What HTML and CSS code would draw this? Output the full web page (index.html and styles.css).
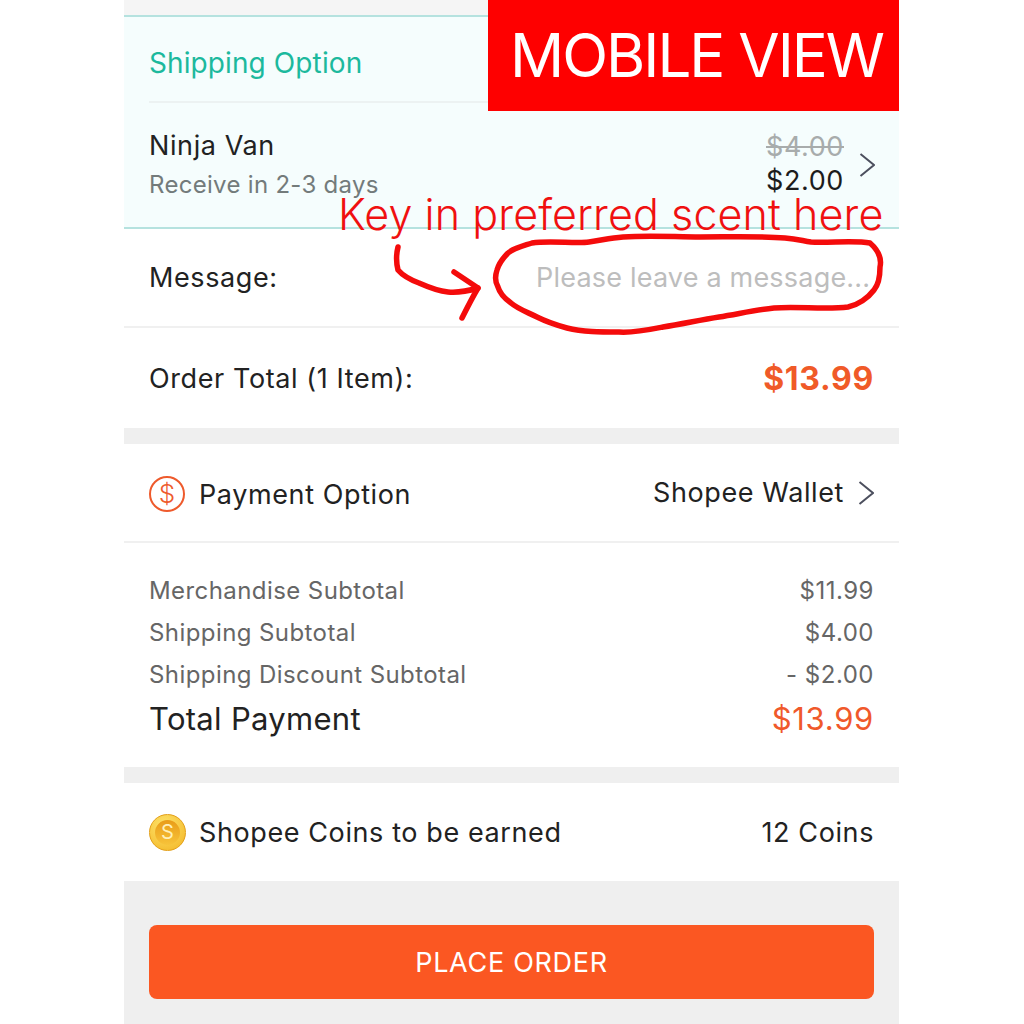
FILE: index.html
```html
<!DOCTYPE html>
<html lang="en">
<head>
  <meta charset="UTF-8" />
  <title>Checkout</title>
  <link rel="stylesheet" href="styles.css">
</head>
<body>
  <div class="phone">
    <div class="top-gap"></div>

    <section class="shipping">
      <div class="shipping-head">Shipping Option</div>
      <div class="shipping-row">
        <div>
          <div class="courier">Ninja Van</div>
          <div class="eta">Receive in 2-3 days</div>
        </div>
        <div class="shipping-price">
          <div class="prices">
            <div class="old-price">$4.00</div>
            <div class="new-price">$2.00</div>
          </div>
          <svg class="chevron" viewBox="0 0 16 24"><path d="M1.5 1 L15 12 L1.5 23" /></svg>
        </div>
      </div>
    </section>

    <section class="row message-row">
      <span>Message:</span>
      <span class="placeholder">Please leave a message...</span>
    </section>

    <section class="row total-row">
      <span>Order Total (1 Item):</span>
      <span class="total-price">$13.99</span>
    </section>

    <div class="gap"></div>

    <section class="row payment-row">
      <span class="with-icon">
        <span class="dollar-icon">$</span>
        Payment Option
      </span>
      <span class="payment-value">
        Shopee Wallet
        <svg class="chevron" viewBox="0 0 16 24"><path d="M1.5 1 L15 12 L1.5 23" /></svg>
      </span>
    </section>

    <section class="summary">
      <div class="summary-row"><span>Merchandise Subtotal</span><span class="summary-num">$11.99</span></div>
      <div class="summary-row"><span>Shipping Subtotal</span><span class="summary-num">$4.00</span></div>
      <div class="summary-row"><span>Shipping Discount Subtotal</span><span class="summary-num">- $2.00</span></div>
      <div class="summary-total"><span>Total Payment</span><span class="summary-amount">$13.99</span></div>
    </section>

    <div class="gap"></div>

    <section class="row coins-row">
      <span class="with-icon">
        <span class="coin-icon"><span class="coin-inner">S</span></span>
        Shopee Coins to be earned
      </span>
      <span>12 Coins</span>
    </section>

    <div class="footer">
      <button class="place-order">PLACE ORDER</button>
    </div>

    <div class="view-tag">MOBILE VIEW</div>
    <div class="note">Key in preferred scent here</div>
    <svg class="scribble" viewBox="0 0 1024 1024">
      <path d="M532 243 C550 240 575 244 589 242 C603 240 610 238 623 237 C650 235 675 237 700 237 C730 237 760 236 785 238 C798 239 803 241 811 242 C830 243 855 240 870 243 C878 250 882 258 880 267 C880 276 879 284 874 290 C868 298 858 305 848 307 C825 310 798 306 774 308 C755 310 738 314 719 317 C700 320 682 324 663 327 C648 330 634 333 619 332 C600 332 583 332 567 328 C556 325 547 322 537 317 C527 312 518 309 511 303 C504 298 500 294 498 287 C495 282 495 276 497 270 C499 263 503 258 508 253 C514 248 523 246 532 243 Z" />
      <path d="M398 247 C396 255 396 262 398 270 C404 277 411 280 419 283 C428 287 438 291 448 292 C458 293 468 291 478 288" />
      <path d="M454 272 L478 288 C472 298 467 308 462 318" />
    </svg>
  </div>
</body>
</html>
```

FILE: styles.css
```css
body {
  margin: 0;
  background: #fff;
  font-family: Inter, "Liberation Sans", sans-serif;
  color: #222;
}

.phone {
  position: relative;
  width: 775px;
  height: 1024px;
  margin-left: 124px;
  overflow: hidden;
  display: flex;
  flex-direction: column;
  font-size: 27px;
  letter-spacing: 0.6px;
}

.top-gap {
  height: 15px;
  background: #f5f5f5;
}

.gap {
  height: 16px;
  background: #efefef;
}

/* shipping block */
.shipping {
  height: 214px;
  box-sizing: border-box;
  padding-left: 25px;
  background: #f5fdfd;
  border-top: 2px solid #b5e2df;
  border-bottom: 2px solid #b5e2df;
}

.shipping-head {
  height: 84px;
  line-height: 92px;
  font-size: 28px;
  letter-spacing: 0.1px;
  color: #1cb99d;
  border-bottom: 2px solid #ecf2f2;
}

.shipping-row {
  display: flex;
  justify-content: space-between;
  padding: 24px 24px 0 0;
}

.courier {
  line-height: 38px;
}

.eta {
  margin-top: 2px;
  font-size: 24px;
  line-height: 36px;
  letter-spacing: 0.3px;
  color: #737b7b;
}

.shipping-price {
  display: flex;
  align-items: center;
  gap: 15px;
}

.prices {
  padding-bottom: 2px;
  text-align: right;
  font-size: 27px;
  line-height: 34px;
}

.old-price {
  color: #a8acac;
  text-decoration: line-through;
}

.new-price {
  color: #1c1c1c;
}

.chevron {
  width: 16px;
  height: 24px;
  flex-shrink: 0;
}

.chevron path {
  fill: none;
  stroke: #4c4f5e;
  stroke-width: 2;
}

/* plain rows */
.row {
  display: flex;
  justify-content: space-between;
  align-items: center;
  padding: 0 25px;
  box-sizing: border-box;
  background: #fff;
}

.message-row {
  height: 99px;
  border-bottom: 2px solid #f0f0f0;
}

.placeholder {
  width: 338px;
  white-space: nowrap;
  letter-spacing: 0.2px;
  color: #bdbdbd;
  overflow: hidden;
}

.total-row {
  height: 100px;
}

.total-price {
  font-size: 32px;
  font-weight: 700;
  letter-spacing: 0.7px;
  color: #f05a28;
}

.payment-row {
  height: 99px;
  padding-top: 3px;
  border-bottom: 2px solid #f0f0f0;
}

.with-icon {
  display: flex;
  align-items: center;
  gap: 13px;
}

.dollar-icon {
  width: 32px;
  height: 32px;
  margin-right: 1px;
  border: 2.5px solid #ee5a2c;
  border-radius: 50%;
  text-align: center;
  font-size: 26px;
  font-weight: 300;
  line-height: 32px;
  letter-spacing: 0;
  color: #ee5a2c;
}

.payment-value {
  display: flex;
  align-items: center;
  gap: 14px;
  margin-top: -3px;
}

/* price summary */
.summary {
  height: 224px;
  padding: 26px 25px 0;
  box-sizing: border-box;
  background: #fff;
}

.summary-row,
.summary-total {
  display: flex;
  justify-content: space-between;
  align-items: center;
}

.summary-row {
  height: 42px;
  font-size: 24px;
  letter-spacing: 0.42px;
  color: #666;
}

.summary-num {
  letter-spacing: 0.5px;
}

.summary-total {
  height: 46px;
  font-size: 31px;
  letter-spacing: 0.3px;
  color: #222;
}

.summary-amount {
  letter-spacing: 0.7px;
  color: #f0592b;
}

.coins-row {
  height: 98px;
}

.coin-icon {
  display: flex;
  align-items: center;
  justify-content: center;
  width: 37px;
  height: 37px;
  border-radius: 50%;
  background: radial-gradient(circle at 40% 30%, #fde36a, #f3b423);
  border: 1px solid #e39f17;
  box-sizing: border-box;
}

.coin-inner {
  width: 25px;
  height: 25px;
  border-radius: 50%;
  background: linear-gradient(#e99c18, #f7c33a);
  text-align: center;
  font-size: 20px;
  line-height: 25px;
  letter-spacing: 0;
  color: #fff0b8;
}

.footer {
  flex: 1;
  padding: 44px 25px 0;
  background: #efefef;
}

.place-order {
  display: block;
  width: 100%;
  height: 74px;
  border: none;
  border-radius: 8px;
  background: #fb5722;
  color: #fff;
  font-family: inherit;
  font-size: 27px;
  letter-spacing: 0.7px;
}

/* annotations drawn over the screenshot */
.view-tag {
  position: absolute;
  top: 0;
  right: 0;
  width: 411px;
  height: 111px;
  padding-left: 6px;
  box-sizing: border-box;
  background: #fe0000;
  color: #fff;
  font-size: 60px;
  line-height: 110px;
  letter-spacing: -2px;
  text-align: center;
  white-space: nowrap;
}

.note {
  position: absolute;
  top: 197px;
  left: 214px;
  font-size: 43px;
  font-weight: 300;
  line-height: 34px;
  letter-spacing: 0.1px;
  white-space: nowrap;
  color: #f01010;
}

.scribble {
  position: absolute;
  top: 0;
  left: -124px;
  width: 1024px;
  height: 1024px;
  pointer-events: none;
}

.scribble path {
  fill: none;
  stroke: #f40b0b;
  stroke-width: 5.5;
  stroke-linecap: round;
  stroke-linejoin: round;
}
```
